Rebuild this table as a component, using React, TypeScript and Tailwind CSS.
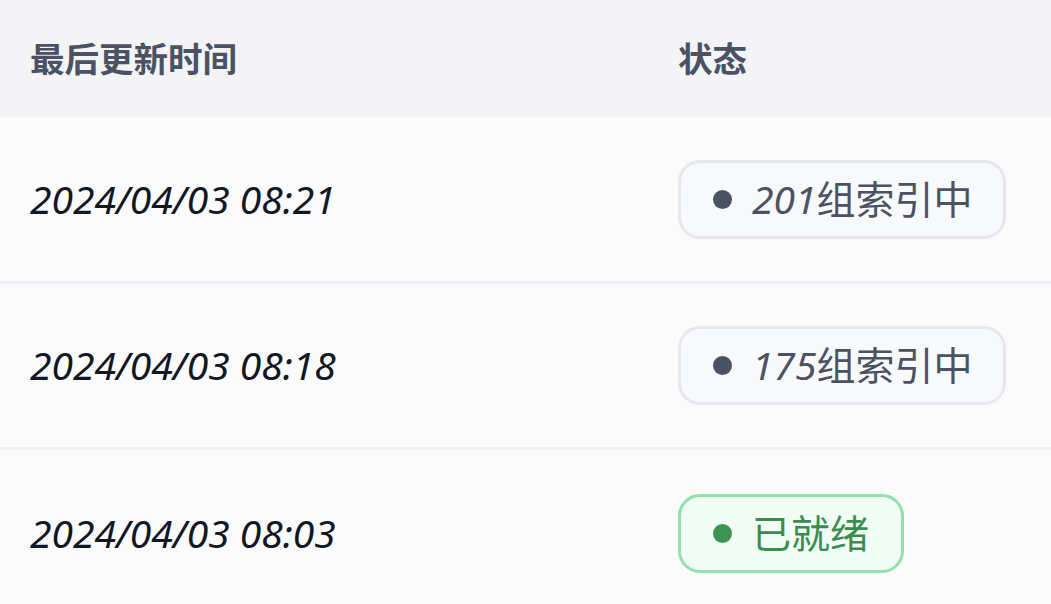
import React from "react";

const font = { fontFamily: '"Noto Sans", "Noto Sans CJK SC", sans-serif' };

type Row = { time: string; kind: "indexing" | "ready"; count?: string };

const rows: Row[] = [
  { time: "2024/04/03 08:21", kind: "indexing", count: "201" },
  { time: "2024/04/03 08:18", kind: "indexing", count: "175" },
  { time: "2024/04/03 08:03", kind: "ready" },
];

function Badge({ row }: { row: Row }) {
  if (row.kind === "ready") {
    return (
      <span className="inline-flex h-[79px] items-center gap-[20px] rounded-[22px] border-[3px] border-[#90e2aa] bg-[#f1fcf4] pl-[32px] pr-[32px] text-[39px] text-[#3b8c50]">
        <span className="h-[19px] w-[19px] rounded-full bg-[#3d9352]" />
        <span>已就绪</span>
      </span>
    );
  }
  return (
    <span className="inline-flex h-[79px] items-center gap-[20px] rounded-[22px] border-[3px] border-[#e6e8ee] bg-[#f8f9fb] pl-[32px] pr-[31px] text-[39px] text-[#4b5263]">
      <span className="h-[19px] w-[19px] rounded-full bg-[#4b5263]" />
      <span>
        <i>{row.count}</i>组索引中
      </span>
    </span>
  );
}

export default function App() {
  return (
    <div className="h-[604px] w-[1051px] overflow-hidden bg-[#fbfbfc]" style={font}>
      <div className="grid h-[118px] grid-cols-[648px_1fr] items-center bg-[#f4f4f6] text-[34.5px] font-semibold text-[#4b5263]">
        <div className="pl-[30px]">最后更新时间</div>
        <div className="pl-[30px]">状态</div>
      </div>
      {rows.map((r, i) => (
        <div
          key={i}
          className={`grid h-[166px] grid-cols-[648px_1fr] items-center ${i < rows.length - 1 ? "border-b-[3px] border-[#eef0f5]" : ""}`}
        >
          <div className="pl-[30px] text-[39px] italic text-[#121726]">{r.time}</div>
          <div className="pl-[30px]">
            <Badge row={r} />
          </div>
        </div>
      ))}
    </div>
  );
}
